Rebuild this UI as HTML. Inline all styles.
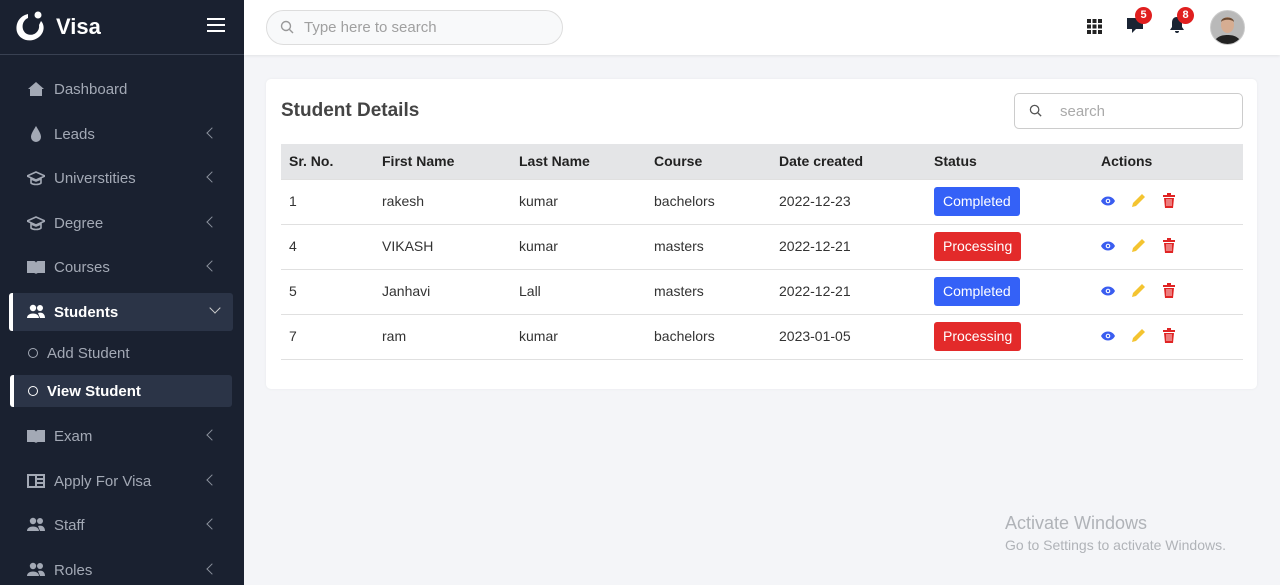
<!DOCTYPE html>
<html><head><meta charset="utf-8"><style>
*{margin:0;padding:0;box-sizing:border-box}
html,body{width:1280px;height:585px;overflow:hidden}
body{background:#f4f5f8;font-family:"Liberation Sans",Arial,sans-serif;position:relative}
.sb{position:absolute;left:0;top:0;width:244px;height:585px;background:#1a2130}
.logo{position:absolute;left:0;top:0;width:244px;height:55px;border-bottom:1px solid #394152}
.mi{position:absolute;left:0;width:244px;height:38px;color:#a3a9b5;font-size:15px;display:flex;align-items:center}
.mi .ic{position:absolute;left:27px;width:18px;height:16px;fill:#a3a9b5}
.mi .t{position:absolute;left:54px}
.mi .ch{position:absolute;left:208px;top:14px;width:8px;height:8px;border-left:1.5px solid #8a909c;border-bottom:1.5px solid #8a909c;transform:rotate(45deg)}
.act{background:#2b3447;border-left:4px solid #fff;border-radius:3px;color:#fff}
.hd{position:absolute;left:244px;top:0;right:0;height:55px;background:#fff;box-shadow:0 1px 3px rgba(0,0,0,.08)}
.card{position:absolute;left:266px;top:79px;width:991px;height:310px;background:#fff;border-radius:5px;box-shadow:0 0 3px rgba(0,0,0,.05)}
.th{position:absolute;left:281px;top:144px;width:962px;height:36px;background:#e4e5e7}
.c{position:absolute;font-size:14px;color:#333}
.h{font-weight:bold;color:#222}
.rl{position:absolute;left:281px;width:962px;height:1px;background:#e0e0e0}
.bd{position:absolute;height:29px;border-radius:3px;color:#fff;font-size:14px;line-height:29px;padding:0 9px}
.bl{background:#3461f7}.rd{background:#e32a2a}
</style></head><body>
<div class="sb">
 <div class="logo">
  <svg style="position:absolute;left:14px;top:10px" width="34" height="34" viewBox="0 0 34 34"><path d="M14 4 C5 6 1 14 3 22 C6 31 19 34 27 25 C31 20 30 14 27 11 L25 15 C26 21 20 27 13 24 C7 21 7 11 14 8 Z" fill="#fff"/><circle cx="24" cy="5" r="3.5" fill="#fff"/></svg>
  <div style="position:absolute;left:56px;top:14px;color:#fff;font-size:22px;font-weight:bold">Visa</div>
  <div style="position:absolute;left:207px;top:18px;width:18px;height:2px;background:#fff;box-shadow:0 6px 0 #fff,0 12px 0 #fff"></div>
 </div>
 <div class="mi" style="top:70px"><svg class="ic" viewBox="0 0 18 16"><path d="M9 1 L1 8 H3 V15 H15 V8 H17 Z"/></svg><span class="t">Dashboard</span></div>
 <div class="mi" style="top:115px"><svg class="ic" viewBox="0 0 18 16"><path d="M9 0 C6 5 4 8 4 11 A5 5 0 0 0 14 11 C14 8 12 5 9 0Z"/></svg><span class="t">Leads</span><i class="ch"></i></div>
 <div class="mi" style="top:159px"><svg class="ic" viewBox="0 0 18 16"><path d="M9 2 L0 6 L9 10 L18 6Z M4 9 V13 C6 15 12 15 14 13 V9 L9 11Z" fill="none" stroke="#a3a9b5" stroke-width="1.6"/></svg><span class="t">Universtities</span><i class="ch"></i></div>
 <div class="mi" style="top:204px"><svg class="ic" viewBox="0 0 18 16"><path d="M9 2 L0 6 L9 10 L18 6Z M4 9 V13 C6 15 12 15 14 13 V9 L9 11Z" fill="none" stroke="#a3a9b5" stroke-width="1.6"/></svg><span class="t">Degree</span><i class="ch"></i></div>
 <div class="mi" style="top:248px"><svg class="ic" viewBox="0 0 18 16"><path d="M0 2 H7 C8 2 9 3 9 4 V15 C8 14 7 14 6 14 H0Z M18 2 H11 C10 2 9 3 9 4 V15 C10 14 11 14 12 14 H18Z"/></svg><span class="t">Courses</span><i class="ch"></i></div>
 <div class="mi act" style="top:293px;left:9px;width:224px;height:38px;font-weight:bold"><svg class="ic" style="left:14px;fill:#fff" viewBox="0 0 18 16"><circle cx="6" cy="4" r="3.2"/><circle cx="13" cy="4" r="3"/><path d="M0 14 C0 8 12 8 12 14Z M11 9 C14 8 18 9 18 14 H13Z"/></svg><span class="t" style="left:41px">Students</span><i class="ch" style="left:198px;top:11px;transform:rotate(-45deg);border-color:#ccc"></i></div>
 <div class="mi" style="top:334px;height:38px"><span style="position:absolute;left:28px;width:10px;height:10px;border:1.5px solid #a3a9b5;border-radius:50%"></span><span class="t" style="left:47px">Add Student</span></div>
 <div class="mi act" style="top:375px;left:10px;width:222px;height:32px;font-weight:bold"><span style="position:absolute;left:14px;width:10px;height:10px;border:1.5px solid #fff;border-radius:50%"></span><span class="t" style="left:33px">View Student</span></div>
 <div class="mi" style="top:417px"><svg class="ic" viewBox="0 0 18 16"><path d="M0 2 H7 C8 2 9 3 9 4 V15 C8 14 7 14 6 14 H0Z M18 2 H11 C10 2 9 3 9 4 V15 C10 14 11 14 12 14 H18Z"/></svg><span class="t">Exam</span><i class="ch"></i></div>
 <div class="mi" style="top:462px"><svg class="ic" viewBox="0 0 18 16"><path d="M0 1 H18 V15 H0Z M2 3 V13 H8 V3Z M10 3 V5 H16 V3Z M10 7 V9 H16 V7Z M10 11 V13 H16 V11Z" fill-rule="evenodd"/></svg><span class="t">Apply For Visa</span><i class="ch"></i></div>
 <div class="mi" style="top:506px"><svg class="ic" viewBox="0 0 18 16"><circle cx="6" cy="4" r="3.2"/><circle cx="13" cy="4" r="3"/><path d="M0 14 C0 8 12 8 12 14Z M11 9 C14 8 18 9 18 14 H13Z"/></svg><span class="t">Staff</span><i class="ch"></i></div>
 <div class="mi" style="top:551px"><svg class="ic" viewBox="0 0 18 16"><circle cx="6" cy="4" r="3.2"/><circle cx="13" cy="4" r="3"/><path d="M0 14 C0 8 12 8 12 14Z M11 9 C14 8 18 9 18 14 H13Z"/></svg><span class="t">Roles</span><i class="ch"></i></div>
</div>
<div class="hd">
 <div style="position:absolute;left:22px;top:10px;width:297px;height:35px;border:1px solid #ddd;border-radius:18px;background:#f8f9fa"></div>
 <svg style="position:absolute;left:36px;top:20px" width="15" height="15" viewBox="0 0 15 15"><circle cx="6" cy="6" r="4.5" fill="none" stroke="#999" stroke-width="1.4"/><path d="M9.5 9.5 L13 13" stroke="#999" stroke-width="1.4"/></svg>
 <div style="position:absolute;left:60px;top:19px;color:#a0a0a0;font-size:15px">Type here to search</div>
 <svg style="position:absolute;left:843px;top:19px" width="15" height="15" viewBox="0 0 15 15" fill="#222"><rect x="0" y="0" width="4" height="4"/><rect x="5.5" y="0" width="4" height="4"/><rect x="11" y="0" width="4" height="4"/><rect x="0" y="5.5" width="4" height="4"/><rect x="5.5" y="5.5" width="4" height="4"/><rect x="11" y="5.5" width="4" height="4"/><rect x="0" y="11" width="4" height="4"/><rect x="5.5" y="11" width="4" height="4"/><rect x="11" y="11" width="4" height="4"/></svg>
 <svg style="position:absolute;left:882px;top:16px" width="18" height="18" viewBox="0 0 18 18" fill="#1a2433"><path d="M1 2 H17 V13 H10 L6 17 V13 H1Z"/></svg>
 <div style="position:absolute;left:891px;top:7px;width:17px;height:17px;border-radius:50%;background:#e01f1f;color:#fff;font-size:11px;font-weight:bold;text-align:center;line-height:17px">5</div>
 <svg style="position:absolute;left:925px;top:16px" width="16" height="18" viewBox="0 0 16 18" fill="#1a2433"><path d="M8 1 C4 1 3 4 3 7 V11 L1 14 H15 L13 11 V7 C13 4 12 1 8 1Z M6 15 A2 2 0 0 0 10 15Z"/></svg>
 <div style="position:absolute;left:933px;top:7px;width:17px;height:17px;border-radius:50%;background:#e01f1f;color:#fff;font-size:11px;font-weight:bold;text-align:center;line-height:17px">8</div>
 <svg style="position:absolute;left:966px;top:10px" width="35" height="35" viewBox="0 0 35 35"><defs><clipPath id="cc"><circle cx="17.5" cy="17.5" r="17"/></clipPath></defs><g clip-path="url(#cc)"><rect width="35" height="35" fill="#b9b9b9"/><path d="M3 35 C5 27 11 25 17.5 25 C24 25 30 27 32 35Z" fill="#222"/><ellipse cx="17.5" cy="15" rx="6.5" ry="8" fill="#d6ad92"/><path d="M11 12 C11 6 24 6 24 12 C22 9 13 9 11 12Z" fill="#6b4a32"/></g><circle cx="17.5" cy="17.5" r="17" fill="none" stroke="#ccc"/></svg>
</div>
<div class="card"></div>
<div style="position:absolute;left:281px;top:100px;font-size:19px;color:#444;font-weight:bold">Student Details</div>
<div style="position:absolute;left:1014px;top:93px;width:229px;height:36px;border:1px solid #ccc;border-radius:5px"></div>
<svg style="position:absolute;left:1029px;top:104px" width="14" height="14" viewBox="0 0 15 15"><circle cx="6" cy="6" r="4.5" fill="none" stroke="#555" stroke-width="1.4"/><path d="M9.5 9.5 L13 13" stroke="#555" stroke-width="1.4"/></svg>
<div style="position:absolute;left:1060px;top:103px;color:#aaa;font-size:15px">search</div>
<div class="th"></div>
<div class="c h" style="left:289px;top:153px">Sr. No.</div>
<div class="c h" style="left:382px;top:153px">First Name</div>
<div class="c h" style="left:519px;top:153px">Last Name</div>
<div class="c h" style="left:654px;top:153px">Course</div>
<div class="c h" style="left:779px;top:153px">Date created</div>
<div class="c h" style="left:934px;top:153px">Status</div>
<div class="c h" style="left:1101px;top:153px">Actions</div>
<div class="rl" style="top:179px"></div>
<div class="rl" style="top:224px"></div><div class="rl" style="top:269px"></div><div class="rl" style="top:314px"></div><div class="rl" style="top:359px"></div>

<div class="c" style="left:289px;top:193px">1</div><div class="c" style="left:382px;top:193px">rakesh</div><div class="c" style="left:519px;top:193px">kumar</div><div class="c" style="left:654px;top:193px">bachelors</div><div class="c" style="left:779px;top:193px">2022-12-23</div><div class="bd bl" style="left:934px;top:187px">Completed</div>
<div class="c" style="left:289px;top:238px">4</div><div class="c" style="left:382px;top:238px">VIKASH</div><div class="c" style="left:519px;top:238px">kumar</div><div class="c" style="left:654px;top:238px">masters</div><div class="c" style="left:779px;top:238px">2022-12-21</div><div class="bd rd" style="left:934px;top:232px">Processing</div>
<div class="c" style="left:289px;top:283px">5</div><div class="c" style="left:382px;top:283px">Janhavi</div><div class="c" style="left:519px;top:283px">Lall</div><div class="c" style="left:654px;top:283px">masters</div><div class="c" style="left:779px;top:283px">2022-12-21</div><div class="bd bl" style="left:934px;top:277px">Completed</div>
<div class="c" style="left:289px;top:328px">7</div><div class="c" style="left:382px;top:328px">ram</div><div class="c" style="left:519px;top:328px">kumar</div><div class="c" style="left:654px;top:328px">bachelors</div><div class="c" style="left:779px;top:328px">2023-01-05</div><div class="bd rd" style="left:934px;top:322px">Processing</div>

<svg width="0" height="0" style="position:absolute"><defs>
<g id="eye"><path d="M0 6 C3 0 11 0 14 6 C11 12 3 12 0 6Z" fill="#3a5df0"/><circle cx="7" cy="6" r="2.3" fill="#fff"/><circle cx="7" cy="6" r="1.2" fill="#3a5df0"/></g>
<g id="pen"><path d="M11 1 L14 4 L5 13 L1 14 L2 10Z" fill="#f4c430"/></g>
<g id="bin"><path d="M1 2 H13 V4 H1Z M5 0 H9 V2 H5Z M2 5 H12 L11 15 H3Z" fill="#e02424"/><path d="M5 6 V13 M7 6 V13 M9 6 V13" stroke="#fff" stroke-width=".8"/></g>
</defs></svg>
<svg style="position:absolute;left:1101px;top:195px" width="14" height="12"><use href="#eye"/></svg><svg style="position:absolute;left:1131px;top:193px" width="15" height="15"><use href="#pen"/></svg><svg style="position:absolute;left:1162px;top:193px" width="14" height="15"><use href="#bin"/></svg>
<svg style="position:absolute;left:1101px;top:240px" width="14" height="12"><use href="#eye"/></svg><svg style="position:absolute;left:1131px;top:238px" width="15" height="15"><use href="#pen"/></svg><svg style="position:absolute;left:1162px;top:238px" width="14" height="15"><use href="#bin"/></svg>
<svg style="position:absolute;left:1101px;top:285px" width="14" height="12"><use href="#eye"/></svg><svg style="position:absolute;left:1131px;top:283px" width="15" height="15"><use href="#pen"/></svg><svg style="position:absolute;left:1162px;top:283px" width="14" height="15"><use href="#bin"/></svg>
<svg style="position:absolute;left:1101px;top:330px" width="14" height="12"><use href="#eye"/></svg><svg style="position:absolute;left:1131px;top:328px" width="15" height="15"><use href="#pen"/></svg><svg style="position:absolute;left:1162px;top:328px" width="14" height="15"><use href="#bin"/></svg>

<div style="position:absolute;left:1005px;top:513px;color:#b0b3b8;font-size:18px">Activate Windows</div>
<div style="position:absolute;left:1005px;top:537px;color:#b0b3b8;font-size:14px">Go to Settings to activate Windows.</div>
</body></html>
